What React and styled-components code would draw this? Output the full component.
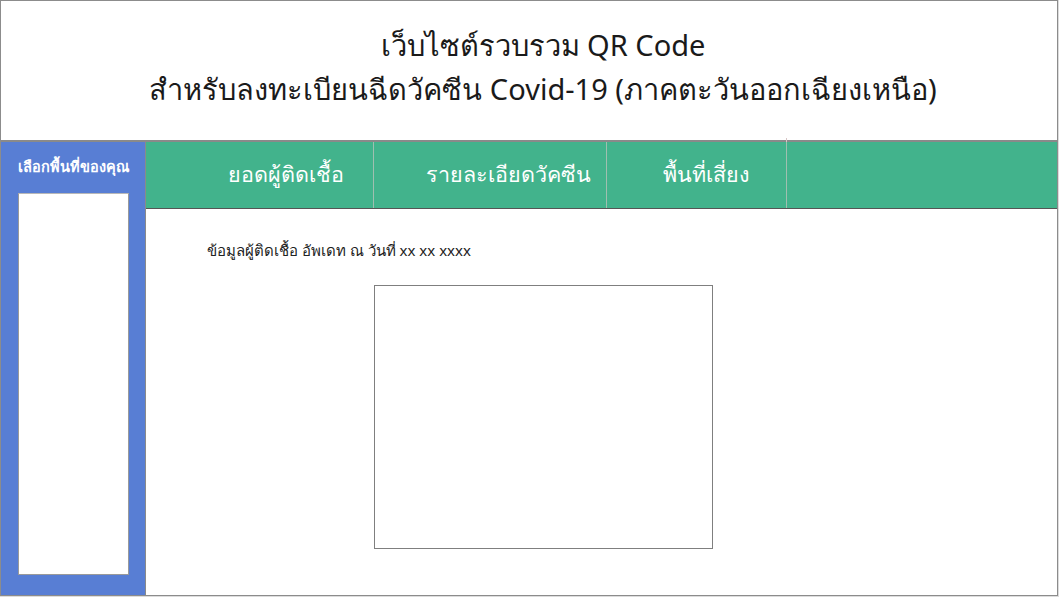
import React from "react";
import styled, {createGlobalStyle} from "styled-components";

const GlobalStyle = createGlobalStyle`
    html, body {
        margin: 0;
        padding: 0;
        background: #dcdcdc;
    }
    body {
        font-family: "Noto Sans", "DejaVu Sans", sans-serif;
    }
`;

const Frame = styled.div`
    width: 1056px;
    height: 594px;
    border: 1px solid #8c8c8c;
    background: white;
    display: flex;
    flex-direction: column;
`;

const Header = styled.header`
    height: 141px;
    border-bottom: 2px solid #8a8a8a;
    display: flex;
    flex-direction: column;
    align-items: center;
    justify-content: center;
    padding: 0 0 8px 28px;
    box-sizing: border-box;
    flex-shrink: 0;

    & h1 {
        margin: 0;
        font-size: 29px;
        font-weight: 400;
        line-height: 44px;
        color: #1a1a1a;
        text-align: center;
    }
`;

const Body = styled.div`
    flex: 1;
    display: flex;
    min-height: 0;
`;

const Sidebar = styled.aside`
    width: 145px;
    background: #587ed4;
    border-right: 1px solid #8a8a8a;
    display: flex;
    flex-direction: column;
    align-items: center;
    padding: 14px 0 20px;
    box-sizing: border-box;
    flex-shrink: 0;

    & h2 {
        margin: 0 0 17px;
        font-size: 14.5px;
        font-weight: 700;
        color: white;
        line-height: 20px;
        white-space: nowrap;
    }
`;

const AreaList = styled.div`
    width: 109px;
    flex: 1;
    background: white;
    border: 1px solid #9a9a9a;
    border-top-color: #b8b8b8;
`;

const Main = styled.main`
    flex: 1;
    display: flex;
    flex-direction: column;
`;

const Nav = styled.nav`
    height: 66px;
    background: #42b38c;
    border-bottom: 1px solid #555;
    display: flex;
    flex-shrink: 0;
`;

const Tab = styled.div`
    position: relative;
    width: ${p => p.$w}px;
    border-right: 1px solid #9fbfb0;
    display: flex;
    align-items: center;
    justify-content: center;
    padding-left: ${p => p.$shift}px;
    padding-bottom: 2px;
    box-sizing: border-box;
    color: white;
    font-size: 21.5px;
    font-weight: 500;

    &:last-child::after {
        content: "";
        position: absolute;
        right: -1px;
        top: -4px;
        width: 1px;
        height: 4px;
        background: #d9c6c6;
    }
`;

const Content = styled.section`
    flex: 1;
    padding: 30px 0 0 61px;
    display: flex;
    flex-direction: column;

    & p {
        margin: 0;
        font-size: 15px;
        color: #222;
        line-height: 22px;
    }
`;

const QrBox = styled.div`
    width: 337px;
    height: 262px;
    margin: 24px 0 0 167px;
    border: 1px solid #7f7f7f;
`;

const tabs = [
    {label: "ยอดผู้ติดเชื้อ", w: 228, shift: 52},
    {label: "รายละเอียดวัคซีน", w: 233, shift: 36},
    {label: "พื้นที่เสี่ยง", w: 180, shift: 18},
];

const App = () => {
    return (
        <>
            <GlobalStyle/>
            <Frame>
                <Header>
                    <h1>เว็บไซต์รวบรวม QR Code</h1>
                    <h1>สำหรับลงทะเบียนฉีดวัคซีน Covid-19 (ภาคตะวันออกเฉียงเหนือ)</h1>
                </Header>
                <Body>
                    <Sidebar>
                        <h2>เลือกพื้นที่ของคุณ</h2>
                        <AreaList/>
                    </Sidebar>
                    <Main>
                        <Nav>
                            {tabs.map(t => (
                                <Tab key={t.label} $w={t.w} $shift={t.shift}>{t.label}</Tab>
                            ))}
                        </Nav>
                        <Content>
                            <p>ข้อมูลผู้ติดเชื้อ อัพเดท ณ วันที่ xx xx xxxx</p>
                            <QrBox/>
                        </Content>
                    </Main>
                </Body>
            </Frame>
        </>
    );
};

export default App;
